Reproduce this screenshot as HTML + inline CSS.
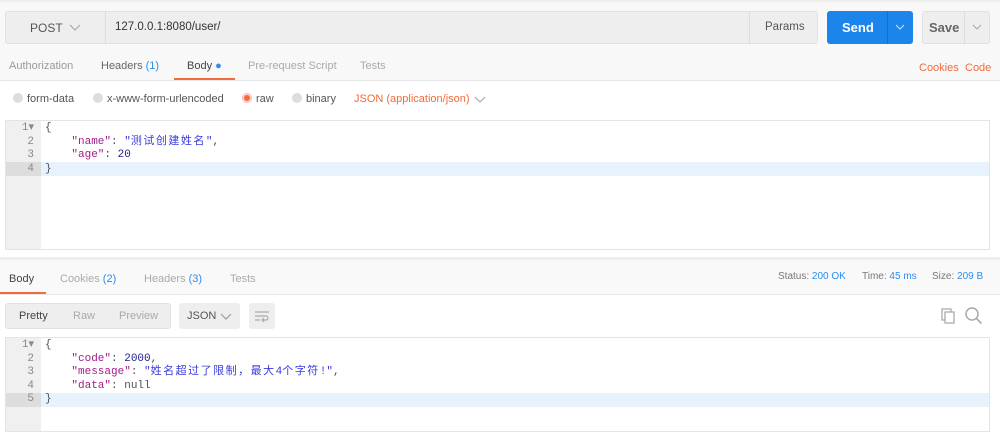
<!DOCTYPE html><html><head><meta charset="utf-8"><style>
*{box-sizing:border-box;margin:0;padding:0}
body{width:1000px;height:428px;overflow:hidden;background:#fff;font-family:"Liberation Sans","Noto Sans CJK SC",sans-serif;font-size:11px;color:#505050;position:relative}
.a{position:absolute}
.mono{font-family:"Liberation Mono","Noto Sans CJK SC",monospace;font-size:11px}
.o{color:#f26b3a}.b{color:#2d8ef0}
.ed{border:1px solid #e4e4e4;background:#fff}
.gut{background:#f0f0f0;width:35px;height:100%;position:absolute;left:0;top:0}
.ln{position:absolute;left:0;width:28px;text-align:right;color:#888}
.k{color:#a11d8a}.s{color:#3a3adf}.n{color:#1d1d8a}
.cj{letter-spacing:1.5px}
.rd{display:inline-block;width:10px;height:10px;border-radius:50%;background:#ddd;vertical-align:-1px;margin-right:4px}
</style></head><body>
<div class="a" style="left:0;top:0;width:1000px;height:80px;background:#f8f8f8"></div>
<div class="a" style="left:0;top:0;width:1000px;height:2px;background:#eee"></div>
<div class="a" style="left:5px;top:11px;width:813px;height:33px;background:#eee;border:1px solid #e2e2e2;border-radius:3px"></div>
<div class="a" style="left:105px;top:11px;width:1px;height:33px;background:#ddd"></div>
<div class="a" style="left:749px;top:11px;width:1px;height:33px;background:#ddd"></div>
<div class="a" style="left:30px;top:21px;font-size:12px;color:#555">POST</div>
<svg class="a" style="left:69px;top:24px" width="12" height="8"><path d="M1 1l5 5 5-5" stroke="#aaa" fill="none" stroke-width="1.2"/></svg>
<div class="a" style="left:115px;top:21px;font-size:11.5px;color:#333">127.0.0.1:8080/user/</div>
<div class="a" style="left:765px;top:21px;font-size:11.5px;color:#555">Params</div>
<div class="a" style="left:827px;top:11px;width:86px;height:33px;background:#1b85eb;border-radius:3px"></div>
<div class="a" style="left:887px;top:11px;width:1px;height:33px;background:#1570cb"></div>
<div class="a" style="left:842px;top:20px;font-size:13px;font-weight:bold;color:#fff">Send</div>
<svg class="a" style="left:895px;top:24px" width="10" height="7"><path d="M1 1l4 4 4-4" stroke="#bcd8f5" fill="none" stroke-width="1.2"/></svg>
<div class="a" style="left:922px;top:11px;width:68px;height:33px;background:#eee;border:1px solid #e2e2e2;border-radius:3px"></div>
<div class="a" style="left:964px;top:11px;width:1px;height:33px;background:#ddd"></div>
<div class="a" style="left:929px;top:20px;font-size:13px;font-weight:bold;color:#666">Save</div>
<svg class="a" style="left:972px;top:24px" width="10" height="7"><path d="M1 1l4 4 4-4" stroke="#aaa" fill="none" stroke-width="1.1"/></svg>
<div class="a" style="left:9px;top:60px;color:#999">Authorization</div>
<div class="a" style="left:101px;top:60px;color:#666">Headers <span class="b">(1)</span></div>
<div class="a" style="left:187px;top:60px;color:#444">Body <span class="b">●</span></div>
<div class="a" style="left:248px;top:60px;color:#aaa">Pre-request Script</div>
<div class="a" style="left:360px;top:60px;color:#aaa">Tests</div>
<div class="a" style="left:174px;top:78px;width:61px;height:2px;background:#f26b3a"></div>
<div class="a" style="left:0;top:80px;width:1000px;height:1px;background:#e6e6e6"></div>
<div class="a o" style="left:919px;top:62px">Cookies</div><div class="a o" style="left:965px;top:62px">Code</div>
<div class="a" style="left:13px;top:93px;color:#555"><span class="rd"></span>form-data</div>
<div class="a" style="left:93px;top:93px;color:#555"><span class="rd"></span>x-www-form-urlencoded</div>
<div class="a" style="left:242px;top:93px;color:#555"><span class="rd" style="background:#f26b3a;box-shadow:inset 0 0 0 2px #fcc"></span>raw</div>
<div class="a" style="left:292px;top:93px;color:#555"><span class="rd"></span>binary</div>
<div class="a o" style="left:354px;top:93px">JSON (application/json)</div>
<svg class="a" style="left:474px;top:96px" width="12" height="8"><path d="M1 1l5 5 5-5" stroke="#aaa" fill="none" stroke-width="1.2"/></svg>
<div class="a ed" style="left:5px;top:120px;width:985px;height:130px"><div class="gut"></div>
<div class="a" style="left:0;top:41px;width:983px;height:14px;background:#e8f2fc"></div>
<div class="a" style="left:0;top:41px;width:35px;height:14px;background:#ddd"></div>
<div class="mono a" style="left:0;top:1px;line-height:13.5px;width:983px">
<div class="ln" style="top:0">1▾</div><div class="ln" style="top:13.5px">2</div><div class="ln" style="top:27px">3</div><div class="ln" style="top:40.5px">4</div>
<div style="position:absolute;left:39px;top:0;white-space:pre">{
    <span class="k">"name"</span>: <span class="s">"<span class="cj">测试创建姓名</span>"</span>,
    <span class="k">"age"</span>: <span class="n">20</span>
}</div></div></div>
<div class="a" style="left:0;top:257px;width:1000px;height:3px;background:#eee"></div>
<div class="a" style="left:0;top:260px;width:1000px;height:35px;background:#f9f9f9;border-bottom:1px solid #e8e8e8"></div>
<div class="a" style="left:9px;top:273px;color:#444">Body</div>
<div class="a" style="left:60px;top:273px;color:#aaa">Cookies <span class="b">(2)</span></div>
<div class="a" style="left:144px;top:273px;color:#aaa">Headers <span class="b">(3)</span></div>
<div class="a" style="left:230px;top:273px;color:#aaa">Tests</div>
<div class="a" style="left:0;top:292px;width:46px;height:2px;background:#f26b3a"></div>
<div class="a" style="left:778px;top:271px;font-size:10px;color:#777">Status: <span class="b">200 OK</span></div>
<div class="a" style="left:862px;top:271px;font-size:10px;color:#777">Time: <span class="b">45 ms</span></div>
<div class="a" style="left:932px;top:271px;font-size:10px;color:#777">Size: <span class="b">209 B</span></div>
<div class="a" style="left:5px;top:303px;width:166px;height:26px;background:#eee;border:1px solid #e2e2e2;border-radius:3px"></div>
<div class="a" style="left:19px;top:310px;color:#444">Pretty</div><div class="a" style="left:73px;top:310px;color:#aaa">Raw</div><div class="a" style="left:119px;top:310px;color:#aaa">Preview</div>
<div class="a" style="left:179px;top:303px;width:61px;height:26px;background:#eee;border-radius:3px"></div>
<div class="a" style="left:187px;top:310px;color:#555">JSON</div>
<svg class="a" style="left:220px;top:313px" width="12" height="8"><path d="M1 1l5 5 5-5" stroke="#999" fill="none" stroke-width="1.2"/></svg>
<div class="a" style="left:249px;top:303px;width:26px;height:26px;background:#eee;border-radius:3px"></div>
<svg class="a" style="left:253px;top:309px" width="18" height="14"><path d="M2 3h14M2 7h11a2 2 0 0 1 0 4h-3M2 11h5M11 9l-2 2 2 2" stroke="#aaa" fill="none" stroke-width="1.2"/></svg>
<svg class="a" style="left:940px;top:307px" width="18" height="18"><rect x="2" y="2" width="9" height="11" fill="none" stroke="#aaa" stroke-width="1.3"/><rect x="5" y="5" width="9" height="11" fill="#fff" stroke="#aaa" stroke-width="1.3"/></svg>
<svg class="a" style="left:964px;top:306px" width="20" height="20"><circle cx="8" cy="8" r="6" fill="none" stroke="#aaa" stroke-width="1.5"/><path d="M12.5 12.5l5 5" stroke="#aaa" stroke-width="1.6"/></svg>
<div class="a ed" style="left:5px;top:337px;width:985px;height:95px"><div class="gut"></div>
<div class="a" style="left:0;top:55px;width:983px;height:14px;background:#e8f2fc"></div>
<div class="a" style="left:0;top:55px;width:35px;height:14px;background:#ddd"></div>
<div class="mono a" style="left:0;top:1px;line-height:13.5px;width:983px">
<div class="ln" style="top:0">1▾</div><div class="ln" style="top:13.5px">2</div><div class="ln" style="top:27px">3</div><div class="ln" style="top:40.5px">4</div><div class="ln" style="top:54px">5</div>
<div style="position:absolute;left:39px;top:0;white-space:pre">{
    <span class="k">"code"</span>: <span class="n">2000</span>,
    <span class="k">"message"</span>: <span class="s">"<span class="cj">姓名超过了限制，最大</span>4<span class="cj">个字符</span>!"</span>,
    <span class="k">"data"</span>: null
}</div></div></div>
</body></html>
